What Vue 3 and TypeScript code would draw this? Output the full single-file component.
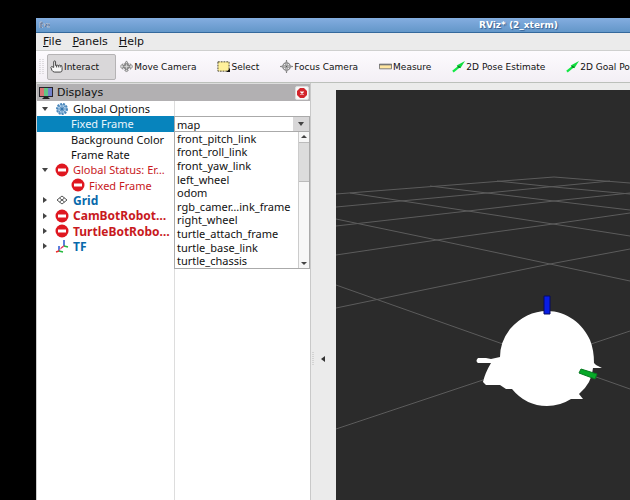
<script setup lang="ts">
import { ref } from 'vue'

interface Tool { icon: string; label: string }
interface Row { label: string; icon: string; arrow: 'open' | 'closed' | ''; tone: string; child?: boolean }

const menus = ['File', 'Panels', 'Help']
const tools: Tool[] = [
  { icon: 'hand', label: 'Interact' },
  { icon: 'move', label: 'Move Camera' },
  { icon: 'select', label: 'Select' },
  { icon: 'focus', label: 'Focus Camera' },
  { icon: 'measure', label: 'Measure' },
  { icon: 'arrow', label: '2D Pose Estimate' },
  { icon: 'arrow', label: '2D Goal Pose' },
]
const rows: Row[] = [
  { label: 'Global Options', icon: 'gear', arrow: 'open', tone: '' },
  { label: 'Fixed Frame', icon: '', arrow: '', tone: 'selected', child: true },
  { label: 'Background Color', icon: '', arrow: '', tone: '', child: true },
  { label: 'Frame Rate', icon: '', arrow: '', tone: '', child: true },
  { label: 'Global Status: Er…', icon: 'error', arrow: 'open', tone: 'bad' },
  { label: 'Fixed Frame', icon: 'error', arrow: '', tone: 'bad', child: true },
  { label: 'Grid', icon: 'grid', arrow: 'closed', tone: 'good' },
  { label: 'CamBotRobot…', icon: 'error', arrow: 'closed', tone: 'bad strong' },
  { label: 'TurtleBotRobo…', icon: 'error', arrow: 'closed', tone: 'bad strong' },
  { label: 'TF', icon: 'tf', arrow: 'closed', tone: 'good' },
]
const frames = [
  'front_pitch_link', 'front_roll_link', 'front_yaw_link', 'left_wheel', 'odom',
  'rgb_camer…ink_frame', 'right_wheel', 'turtle_attach_frame', 'turtle_base_link', 'turtle_chassis',
]
const activeTool = ref('Interact')
const fixedFrame = ref('map')
</script>

<template>
  <div class="desktop">
    <div class="window">
      <header class="titlebar">
        <svg class="logo" viewBox="0 0 12 8" aria-hidden="true">
          <path d="M1 7V1h2v3H1l3 3M5 2l1 4 2-4M8 3h3L8 6h3" fill="none" stroke="#b8bcc8" />
          <path d="M2 7V2h2M6 6l2-3M9 4h2" fill="none" stroke="#5d6f91" />
        </svg>
        <h1>RViz* (2_xterm)</h1>
      </header>

      <nav class="menubar">
        <button v-for="m in menus" :key="m" type="button"><u>{{ m[0] }}</u>{{ m.slice(1) }}</button>
      </nav>

      <div class="toolbar">
        <svg class="grip" viewBox="0 0 5 16" aria-hidden="true">
          <path d="M1 0v16M4 0v16" stroke="#c4c2c5" stroke-dasharray="1 1" />
        </svg>
        <button
          v-for="t in tools" :key="t.label" type="button" class="tool"
          :class="{ active: t.label === activeTool }" @click="activeTool = t.label"
        >
          <svg v-if="t.icon === 'hand'" viewBox="0 0 14 14" aria-hidden="true">
            <path d="M4 8V2q0-1 1-1t1 1v4q2-1 3 0 1-1 2 0 2-1 2 2v3q0 2-2 2H5q-2 0-3-2L1 8q0-2 3 0Z" fill="#f8f8f8" stroke="#3a3a3a" />
            <path d="M7 6v2M9 6v2M11 6v2" stroke="#444" />
          </svg>
          <svg v-else-if="t.icon === 'move'" viewBox="0 0 14 14" aria-hidden="true">
            <path d="M7 1 9 4H8v2h3V4l3 3-3 3V8H8v3h1l-2 2-2-2h1V8H3v2L0 7l3-3v2h3V4H5Z" fill="#d5d5d5" stroke="#666" stroke-width=".7" />
            <circle cx="7" cy="7" r="3" fill="none" stroke="#777" />
          </svg>
          <svg v-else-if="t.icon === 'select'" viewBox="0 0 14 14" aria-hidden="true">
            <path d="M1 2h12v10H1Z" fill="#fff09b" stroke="#403c29" stroke-dasharray="2 1" />
            <path d="M14 9v4h-4Z" fill="#111" />
          </svg>
          <svg v-else-if="t.icon === 'focus'" viewBox="0 0 14 14" aria-hidden="true">
            <circle cx="7" cy="7" r="4" fill="none" stroke="#858585" stroke-width="1.3" />
            <path d="M7 0 8 6l6 1-6 1-1 6-1-6-6-1 6-1Z" fill="#ddd" stroke="#777" stroke-width=".8" />
            <circle cx="7" cy="7" r="1" fill="#555" />
          </svg>
          <svg v-else-if="t.icon === 'measure'" viewBox="0 0 14 14" aria-hidden="true">
            <path d="M.5 4.5h13v5H.5Z" fill="#ffe6a0" stroke="#777" />
            <path d="M0 5h14" stroke="#777" stroke-width="1.5" />
          </svg>
          <svg v-else viewBox="0 0 14 14" aria-hidden="true">
            <path d="M1 12.500 9 6" stroke="#12e845" stroke-width="2.4" />
            <path d="M14 1 9 9 5 6Z" fill="#10dd3d" />
            <path d="m6 7 3 1" stroke="#087c20" stroke-width="1.5" />
          </svg>
          <span>{{ t.label }}</span>
        </button>
      </div>

      <main class="workspace">
        <section class="displays" aria-label="Displays">
          <div class="dock-title">
            <svg class="monitor" viewBox="0 0 14 14" aria-hidden="true">
              <path d="M0 1h14v10H0Z" fill="#26242a" />
              <path d="M1 2h4v8H1Z" fill="#d87474" /><path d="M5 2h4v8H5Z" fill="#62c585" /><path d="M9 2h4v8H9Z" fill="#7180ca" />
              <path d="M5 11h4l2 2H3Z" fill="#222" />
            </svg>
            <h2>Displays</h2>
            <button type="button" class="close" aria-label="Close">
              <svg viewBox="0 0 10 10"><path d="M3 0h4l3 3v4l-3 3H3L0 7V3Z" fill="#d3242b" /><path d="m3.500 3.500 3 3m0-3-3 3" stroke="#fff" stroke-width="1.4" /></svg>
            </button>
          </div>

          <div class="properties">
            <ul class="tree">
              <li v-for="(r, i) in rows" :key="i" :class="[r.tone, { child: r.child }]">
                <svg class="expander" viewBox="0 0 8 8" aria-hidden="true">
                  <path v-if="r.arrow === 'open'" d="M1 2h6L4 6Z" fill="#444" />
                  <path v-else-if="r.arrow === 'closed'" d="M2 1v6l4-3Z" fill="#444" />
                </svg>
                <svg v-if="r.icon === 'error'" class="icon" viewBox="0 0 14 14" aria-hidden="true">
                  <circle cx="7" cy="7" r="6.5" fill="#df1720" /><path d="M3 5.5h8v3H3Z" fill="#fff" />
                </svg>
                <svg v-else-if="r.icon === 'gear'" class="icon" viewBox="0 0 14 14" aria-hidden="true">
                  <circle cx="7" cy="7" r="5" fill="#a9cbe8" stroke="#4d89bd" stroke-width="2" stroke-dasharray="2 1" />
                  <path d="M7 2v10M2 7h10M3.5 3.5l7 7M10.5 3.5l-7 7" stroke="#4781b5" stroke-width=".7" />
                  <circle cx="7" cy="7" r="1.5" fill="#3675ac" />
                </svg>
                <svg v-else-if="r.icon === 'grid'" class="icon" viewBox="0 0 14 14" aria-hidden="true">
                  <path d="m7 3 5 4-5 4-5-4Zm-2.5 2 5 4m0-4-5 4" fill="none" stroke="#555" />
                </svg>
                <svg v-else-if="r.icon === 'tf'" class="icon" viewBox="0 0 14 14" aria-hidden="true">
                  <path d="M9 7V1M4 12V7" stroke="#2455d0" stroke-width="1.5" />
                  <path d="m9 7 4 1M4 12l4 1" stroke="#22b93c" stroke-width="1.5" />
                  <path d="m9 7-3 2M4 12l-3 1" stroke="#ef2c2c" stroke-width="1.5" />
                  <path d="m4 11 5-4" stroke="#e5549b" />
                </svg>
                <span>{{ r.label }}</span>
              </li>
            </ul>

            <div class="values">
              <div class="combo">
                <select v-model="fixedFrame" aria-label="Fixed Frame">
                  <option>map</option>
                  <option v-for="f in frames" :key="f">{{ f }}</option>
                </select>
                <svg class="drop" viewBox="0 0 16 12" aria-hidden="true"><path d="M5 4h6L8 8Z" fill="#444" /></svg>
                <div class="popup">
                  <ul role="listbox" aria-label="Frames">
                    <li v-for="f in frames" :key="f" role="option" :aria-selected="f === fixedFrame" @click="fixedFrame = f">{{ f }}</li>
                  </ul>
                  <div class="scrollbar" aria-hidden="true">
                    <svg viewBox="0 0 10 10"><path d="M2 6h6L5 3Z" fill="#444" /></svg>
                    <div class="thumb"></div>
                    <div class="track"></div>
                    <svg viewBox="0 0 10 10"><path d="M2 4h6L5 7Z" fill="#444" /></svg>
                  </div>
                </div>
              </div>
            </div>
          </div>
        </section>

        <div class="splitter">
          <svg class="dots" viewBox="0 0 3 14" aria-hidden="true"><path d="M1 0v14" stroke="#bbb" stroke-dasharray="1 1" /></svg>
          <button type="button" aria-label="Collapse displays"><svg viewBox="0 0 6 8"><path d="M5 1v6L1 4Z" fill="#333" /></svg></button>
        </div>

        <div class="view">
          <svg viewBox="0 0 294 410" preserveAspectRatio="xMinYMin slice" role="img" aria-label="3D view">
            <g fill="none" stroke="#5c5c5c" stroke-width="1">
              <path d="M0 104 218 87 294 93" />
              <path d="M0 117 151 103 274 91" />
              <path d="M0 136 132 121 218 111 294 103" />
              <path d="M0 165 101 150 217 134 294 123" />
              <path d="M0 218 87 200 214 174 294 159" />
              <path d="M0 339 294 241" />
              <path d="M161 91 218 97 294 104" />
              <path d="M94 96 151 103 218 111 294 120" />
              <path d="M14 103 132 121 217 134 294 146" />
              <path d="M0 129 101 150 214 174 294 191" />
              <path d="M0 195 294 299" />
            </g>
            <path
              fill="#fff"
              d="M211 221C231 221 247 234 254 250Q258 260 258 273L260 275 266 278 257 278Q256 293 243 304L247 309 235 309Q224 316 211 316 190 316 176 299L170 299 164 295 150 295 147 292Q149 283 155 273L142 273Q139 271 142 268L150 268 155 269 164 267Q164 252 174 239 190 221 211 221Z"
            />
            <path d="M208 206h6v18h-6Z" fill="#081de5" stroke="#060b60" />
            <path d="m245 279 16 5-2 5-16-6Z" fill="#07a928" stroke="#067a20" />
          </svg>
        </div>
      </main>
    </div>
  </div>
</template>

<style>
body { margin: 0; background: #000; }
</style>

<style scoped>
* { box-sizing: border-box; }
.desktop {
  min-height: 100vh;
  padding: 18px 0 0 36px;
  overflow: hidden;
  background: #000;
  color: #111;
  font-family: "DejaVu Sans", sans-serif;
  font-size: 11px;
}
.window { display: flex; flex-direction: column; min-height: calc(100vh - 18px); background: #ebebeb; }
h1, h2, ul { margin: 0; padding: 0; font-size: inherit; }
ul { list-style: none; }
button, select { padding: 0; border: 0; background: none; color: inherit; font: inherit; }
svg { display: block; flex: none; }

.titlebar {
  display: flex;
  align-items: center;
  height: 15px;
  padding-left: 3px;
  background: linear-gradient(#84ade0, #6397c9);
  border-bottom: 1px solid #34699c;
}
.logo { width: 12px; height: 8px; }
h1 { margin-left: 428px; color: #fff; font-size: 9px; font-weight: bold; line-height: 14px; white-space: nowrap; text-shadow: 1px 1px 1px #355f91; }

.menubar { display: flex; gap: 11px; height: 18px; padding-left: 7px; border-bottom: 1px solid #cfd0cf; }
.menubar u { text-underline-offset: 1px; }

.toolbar {
  display: flex;
  align-items: center;
  height: 32px;
  padding-left: 3px;
  background: linear-gradient(#fdfbfe, #f3eff5);
  border-bottom: 1px solid #bcc0bb;
  overflow: hidden;
}
.grip { width: 5px; height: 16px; margin-right: 3px; }
.tool { display: flex; flex: none; align-items: center; height: 26px; margin-right: 14px; padding: 0 3px 0 2px; border: 1px solid transparent; border-radius: 2px; font-size: 9px; white-space: nowrap; }
.tool svg { width: 13px; height: 13px; margin-right: 1px; }
.tool.active { margin-right: 1px; padding-right: 16px; border-color: #b5b3b5; background: #d9d7d9; }

.workspace { display: flex; flex: 1; }
.displays { display: flex; flex-direction: column; flex: none; width: 275px; background: #fff; border-left: 1px solid #ccc; border-right: 1px solid #c9c9c9; }
.dock-title { display: flex; align-items: center; height: 18px; padding: 0 1px 0 2px; background: #b2b0b2; border-top: 1px solid #ddd; }
.monitor { width: 14px; height: 14px; margin-right: 4px; }
h2 { flex: 1; font-weight: normal; }
.close { display: grid; place-items: center; width: 14px; height: 14px; background: #f8f8f8; border: 1px solid #ddd; border-radius: 2px; }
.close svg { width: 10px; height: 10px; }

.properties { display: grid; grid-template-columns: 137px 1fr; flex: 1; font-family: "Noto Sans", "DejaVu Sans", sans-serif; }
.tree { display: grid; grid-template-rows: repeat(10, 1fr); height: 153px; }
.tree li { display: flex; align-items: center; padding-left: 4px; line-height: 15px; white-space: nowrap; overflow: hidden; }
.expander { width: 8px; height: 8px; margin-right: 6px; }
.icon { width: 14px; height: 14px; margin-right: 4px; }
.tree .child { padding-left: 20px; }
.tree .selected { background: #0784bd; color: #e9f5fb; }
.bad { color: #c8191d; }
.strong, .good { font-size: 12px; font-weight: bold; }
.good { color: #0869ab; }

.values { min-width: 0; padding-top: 15px; }
.combo { position: relative; height: 16px; border: 1px solid #aaa; }
.combo select { display: block; width: 100%; height: 14px; padding-left: 2px; appearance: none; background: #fff; }
.drop { position: absolute; top: 0; right: 0; width: 16px; height: 14px; background: #d8d7d8; }
.popup { position: absolute; z-index: 1; top: 14px; left: -1px; right: -1px; display: flex; height: 138px; background: #fff; border: 1px solid #aaa; }
.popup ul { display: grid; grid-template-rows: repeat(10, 1fr); flex: 1; min-width: 0; padding-left: 2px; }
.popup li { display: flex; align-items: center; min-height: 0; line-height: 14px; white-space: nowrap; }
.scrollbar { display: flex; flex: none; flex-direction: column; width: 11px; background: #f7f7f7; border-left: 1px solid #ccc; }
.scrollbar svg { width: 10px; height: 10px; }
.thumb { height: 40px; background: #dcdcdc; border: 1px solid #bbb; border-width: 1px 0; }
.track { flex: 1; }
.properties { background: linear-gradient(#ddd, #ddd) 137px 0 / 1px 100% no-repeat; }

.splitter { display: flex; align-items: flex-start; flex: none; gap: 5px; width: 25px; padding: 269px 0 0 1px; }
.dots { width: 3px; height: 14px; }
.splitter button svg { width: 6px; height: 8px; margin-top: 3px; }
.view { flex: 1; min-width: 0; margin-top: 7px; background: #2b2b2b; }
.view svg { width: 100%; height: 100%; }
</style>
